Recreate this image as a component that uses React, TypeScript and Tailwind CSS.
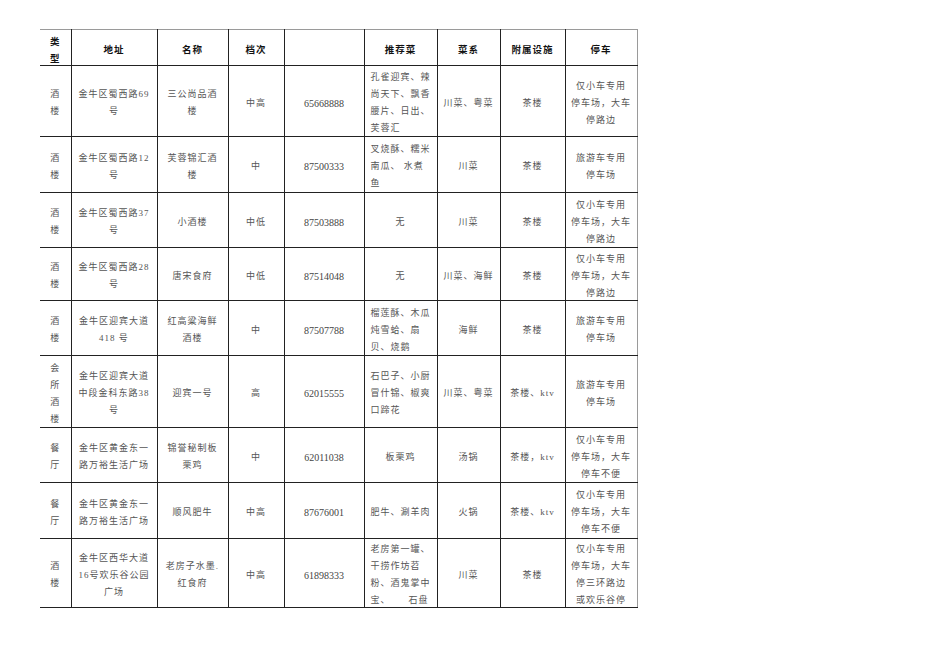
import React from "react";

type Row = {
    kind: string[];
    addr: string[];
    name: string[];
    grade: string;
    phone: string;
    dishes: React.ReactNode[];
    dishesLeft?: boolean;
    cuisine: string;
    extra: string;
    parking: string[];
    h: string;
};

const rows: Row[] = [
    {
        kind: ["酒", "楼"],
        addr: ["金牛区蜀西路69", "号"],
        name: ["三公尚品酒", "楼"],
        grade: "中高",
        phone: "65668888",
        dishes: ["孔雀迎宾、辣", "尚天下、飘香", "腰片、日出、", "芙蓉汇"],
        dishesLeft: true,
        cuisine: "川菜、粤菜",
        extra: "茶楼",
        parking: ["仅小车专用", "停车场，大车", "停路边"],
        h: "h-[71px]",
    },
    {
        kind: ["酒", "楼"],
        addr: ["金牛区蜀西路12", "号"],
        name: ["芙蓉锦汇酒", "楼"],
        grade: "中",
        phone: "87500333",
        dishes: ["叉烧酥、糯米", "南瓜、\u00a0水煮", "鱼"],
        dishesLeft: true,
        cuisine: "川菜",
        extra: "茶楼",
        parking: ["旅游车专用", "停车场"],
        h: "h-[56px]",
    },
    {
        kind: ["酒", "楼"],
        addr: ["金牛区蜀西路37", "号"],
        name: ["小酒楼"],
        grade: "中低",
        phone: "87503888",
        dishes: ["无"],
        cuisine: "川菜",
        extra: "茶楼",
        parking: ["仅小车专用", "停车场，大车", "停路边"],
        h: "h-[55px]",
    },
    {
        kind: ["酒", "楼"],
        addr: ["金牛区蜀西路28", "号"],
        name: ["唐宋食府"],
        grade: "中低",
        phone: "87514048",
        dishes: ["无"],
        cuisine: "川菜、海鲜",
        extra: "茶楼",
        parking: ["仅小车专用", "停车场，大车", "停路边"],
        h: "h-[53px]",
    },
    {
        kind: ["酒", "楼"],
        addr: ["金牛区迎宾大道", "418 号"],
        name: ["红高粱海鲜", "酒楼"],
        grade: "中",
        phone: "87507788",
        dishes: ["榴莲酥、木瓜", "炖雪蛤、扇", "贝、烧鹅"],
        dishesLeft: true,
        cuisine: "海鲜",
        extra: "茶楼",
        parking: ["旅游车专用", "停车场"],
        h: "h-[55px]",
    },
    {
        kind: ["会", "所", "酒", "楼"],
        addr: ["金牛区迎宾大道", "中段金科东路38", "号"],
        name: ["迎宾一号"],
        grade: "高",
        phone: "62015555",
        dishes: ["石巴子、小厨", "冒什锦、椒爽", "口蹄花"],
        dishesLeft: true,
        cuisine: "川菜、粤菜",
        extra: "茶楼、ktv",
        parking: ["旅游车专用", "停车场"],
        h: "h-[72px]",
    },
    {
        kind: ["餐", "厅"],
        addr: ["金牛区黄金东一", "路万裕生活广场"],
        name: ["锦誉秘制板", "栗鸡"],
        grade: "中",
        phone: "62011038",
        dishes: ["板栗鸡"],
        cuisine: "汤锅",
        extra: "茶楼，ktv",
        parking: ["仅小车专用", "停车场，大车", "停车不便"],
        h: "h-[55px]",
    },
    {
        kind: ["餐", "厅"],
        addr: ["金牛区黄金东一", "路万裕生活广场"],
        name: ["顺风肥牛"],
        grade: "中高",
        phone: "87676001",
        dishes: ["肥牛、涮羊肉"],
        cuisine: "火锅",
        extra: "茶楼、ktv",
        parking: ["仅小车专用", "停车场，大车", "停车不便"],
        h: "h-[56px]",
    },
    {
        kind: ["酒", "楼"],
        addr: ["金牛区西华大道", "16号欢乐谷公园", "广场"],
        name: ["老房子水墨.", "红食府"],
        grade: "中高",
        phone: "61898333",
        dishes: [
            "老房第一罐、",
            "干捞作坊苕",
            "粉、酒鬼掌中",
            <>
                宝、<span className="ml-[18px]">石盘</span>
            </>,
        ],
        dishesLeft: true,
        cuisine: "川菜",
        extra: "茶楼",
        parking: ["仅小车专用", "停车场，大车", "停三环路边", "或欢乐谷停"],
        h: "h-[69px]",
    },
];

// text sits a touch below the cell centre in the original
const Lines = ({ lines }: { lines: React.ReactNode[] }) => (
    <div className="translate-y-[2px]">
        {lines.map((l, i) => (
            <div key={i} className="whitespace-nowrap">
                {l}
            </div>
        ))}
    </div>
);

const td = "border border-[#222] align-middle px-[3px] py-0 text-center";
const th =
    "border border-[#222] border-t-[#9a9a9a] align-middle px-[3px] py-0 text-center font-bold text-[9.5px] text-[#111]";

export default function App() {
    return (
        <div className="min-h-screen bg-white pt-[29px] pl-[40px] font-['Liberation_Serif','Noto_Sans_CJK_SC',serif]">
            <table className="table-fixed border-collapse w-[597px] text-[9px] leading-[17px] tracking-[1px] text-[#555]">
                <colgroup>
                    <col className="w-[31px]" />
                    <col className="w-[86px]" />
                    <col className="w-[71px]" />
                    <col className="w-[56px]" />
                    <col className="w-[80px]" />
                    <col className="w-[73px]" />
                    <col className="w-[63px]" />
                    <col className="w-[65px]" />
                    <col className="w-[72px]" />
                </colgroup>
                <thead>
                    <tr className="h-[36px]">
                        <th className={`${th} border-l-0`}>
                            <div className="translate-y-[3px]">
                                <div>类</div>
                                <div>型</div>
                            </div>
                        </th>
                        {["地址", "名称", "档次", "", "推荐菜", "菜系", "附属设施"].map(
                            (t, i) => (
                                <th key={i} className={th}>
                                    <div className="translate-y-[3px]">{t}</div>
                                </th>
                            )
                        )}
                        <th className={`${th} border-r-[#9a9a9a]`}>
                            <div className="translate-y-[3px]">停车</div>
                        </th>
                    </tr>
                </thead>
                <tbody>
                    {rows.map((r, i) => (
                        <tr key={i} className={r.h}>
                            <td className={`${td} border-l-0`}>
                                <Lines lines={r.kind} />
                            </td>
                            <td className={td}>
                                <Lines lines={r.addr} />
                            </td>
                            <td className={td}>
                                <Lines lines={r.name} />
                            </td>
                            <td className={td}>
                                <Lines lines={[r.grade]} />
                            </td>
                            <td className={`${td} text-[10px] tracking-normal text-[#444]`}>
                                <Lines lines={[r.phone]} />
                            </td>
                            <td
                                className={`${td} ${
                                    r.dishesLeft ? "text-left pl-[6px]" : ""
                                }`}
                            >
                                <Lines lines={r.dishes} />
                            </td>
                            <td className={td}>
                                <Lines lines={[r.cuisine]} />
                            </td>
                            <td className={td}>
                                <Lines lines={[r.extra]} />
                            </td>
                            <td className={`${td} border-r-[#9a9a9a]`}>
                                <Lines lines={r.parking} />
                            </td>
                        </tr>
                    ))}
                </tbody>
            </table>
        </div>
    );
}
